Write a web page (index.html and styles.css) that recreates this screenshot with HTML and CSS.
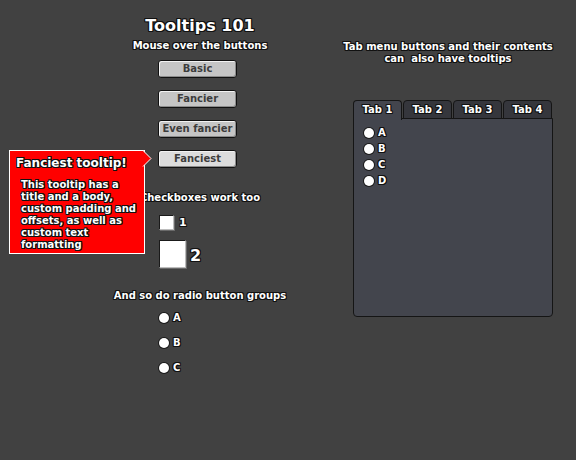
FILE: index.html
```html
<!DOCTYPE html>
<html>
<head>
<meta charset="utf-8">
<link rel="stylesheet" href="styles.css">
</head>
<body>
<div class="page">
  <div class="left">
    <h1 class="title">Tooltips 101</h1>
    <p class="label sub">Mouse over the buttons</p>
    <div class="buttons">
      <div class="btn">Basic</div>
      <div class="btn">Fancier</div>
      <div class="btn">Even fancier</div>
      <div class="btn hover">Fanciest</div>
    </div>
    <p class="label sec-check">Checkboxes work too</p>
    <div class="checks">
      <div class="check-row"><span class="box small"></span><span class="clabel">1</span></div>
      <div class="check-row big-row"><span class="box big"></span><span class="clabel big-label">2</span></div>
    </div>
    <p class="label sec-radio">And so do radio button groups</p>
    <div class="radios">
      <div class="radio-row"><span class="dot"></span><span class="rlabel">A</span></div>
      <div class="radio-row"><span class="dot"></span><span class="rlabel">B</span></div>
      <div class="radio-row"><span class="dot"></span><span class="rlabel">C</span></div>
    </div>
  </div>
  <div class="right">
    <p class="label tabs-info">Tab menu buttons and their contents<br>can &nbsp;also have tooltips</p>
    <div class="tabmenu">
      <div class="tabs">
        <div class="tab active">Tab 1</div>
        <div class="tab">Tab 2</div>
        <div class="tab">Tab 3</div>
        <div class="tab">Tab 4</div>
      </div>
      <div class="panel">
        <div class="radio-row p"><span class="dot"></span><span class="rlabel">A</span></div>
        <div class="radio-row p"><span class="dot"></span><span class="rlabel">B</span></div>
        <div class="radio-row p"><span class="dot"></span><span class="rlabel">C</span></div>
        <div class="radio-row p"><span class="dot"></span><span class="rlabel">D</span></div>
      </div>
    </div>
  </div>
</div>
<div class="tooltip">
  <div class="tt-title">Fanciest tooltip!</div>
  <div class="tt-body">This tooltip has a<br>title and a body,<br>custom padding and<br>offsets, as well as<br>custom text<br>formatting</div>
  <svg class="tt-arrow" width="10" height="18" viewBox="0 0 10 18">
    <polygon points="0,0.5 8,8.5 0,16.5" fill="#ff0000"/>
    <polyline points="0,0.5 8,8.5 0,16.5" fill="none" stroke="#ffffff" stroke-width="1"/>
  </svg>
</div>
</body>
</html>
```
FILE: styles.css
```css
html, body {
  margin: 0;
  padding: 0;
}
body {
  width: 576px;
  height: 460px;
  background: #414141;
  font-family: "DejaVu Sans", sans-serif;
  font-weight: bold;
  color: #fff;
  position: relative;
  overflow: hidden;
}
.page {
  display: flex;
  padding-left: 60px;
}
.left {
  width: 280px;
  padding-top: 16px;
  text-align: center;
}
.right {
  width: 216px;
  padding-top: 41px;
  text-align: center;
}
.title, .label, .rlabel, .clabel, .tab, .tt-title, .tt-body {
  text-shadow: -1px -1px 0 #111, 1px -1px 0 #111, -1px 1px 0 #111, 1px 1px 0 #111,
               0 1px 0 #111, 1px 0 0 #111, -1px 0 0 #111, 0 -1px 0 #111;
}
.title {
  margin: 0;
  font-size: 16px;
  line-height: 20px;
}
.label {
  margin: 0;
  font-size: 10px;
  line-height: 12px;
}
.sub { margin-top: 4px; }
.buttons {
  margin-top: 8px;
  padding-left: 98px;
  display: flex;
  flex-direction: column;
  align-items: flex-start;
  gap: 12px;
}
.btn {
  box-sizing: border-box;
  width: 79px;
  height: 18px;
  border: 1px solid #111;
  border-radius: 3px;
  background: #c5c5c5;
  box-shadow: inset 1px 1px 0 #f2f2f2, inset -1px -1px 0 #8c8c8c;
  color: #3c3c3c;
  font-size: 10px;
  line-height: 16px;
  text-align: center;
}
.btn.hover { background: #dcdcdc; }
.sec-check { margin-top: 24px; }
.checks {
  padding-left: 99px;
  text-align: left;
}
.check-row {
  display: flex;
  align-items: center;
  margin-top: 11px;
}
.check-row.big-row { margin-top: 10px; }
.box {
  box-sizing: border-box;
  background: #fff;
  border: 1px solid;
  border-color: #1a1a1a #bdbdbd #bdbdbd #1a1a1a;
  box-shadow: 1px 1px 0 #6a6a6a;
}
.box.small { width: 15px; height: 15px; }
.box.big { width: 27px; height: 28px; }
.clabel {
  margin-left: 5px;
  font-size: 11px;
  line-height: 12px;
}
.clabel.big-label {
  margin-left: 4px;
  margin-top: 3px;
  font-size: 16px;
  line-height: 18px;
}
.sec-radio { margin-top: 22px; }
.radios {
  margin-top: 10px;
  padding-left: 99px;
  display: flex;
  flex-direction: column;
  gap: 13px;
}
.radio-row {
  display: flex;
  align-items: center;
  height: 12px;
}
.dot {
  width: 10px;
  height: 10px;
  border-radius: 50%;
  background: #fff;
  box-shadow: 0 0 0 1px #1a1a1a;
}
.rlabel {
  margin-left: 4px;
  font-size: 10px;
  line-height: 12px;
}
.tabmenu {
  margin-top: 35px;
  margin-left: 13px;
  width: 200px;
  text-align: left;
}
.tabs {
  display: flex;
  gap: 1px;
  position: relative;
  z-index: 1;
}
.tab {
  box-sizing: border-box;
  width: 49px;
  height: 19px;
  border: 1px solid #151515;
  border-radius: 4px 4px 0 0;
  background: #35363c;
  font-size: 10px;
  line-height: 17px;
  text-align: center;
}
.tab.active {
  background: #43454d;
  height: 20px;
  margin-bottom: -1px;
  border-bottom: none;
}
.panel {
  box-sizing: border-box;
  height: 199px;
  margin-top: -1px;
  background: #43454d;
  border: 1px solid #151515;
  border-radius: 0 0 4px 4px;
  padding: 8px 0 0 10px;
  display: flex;
  flex-direction: column;
  gap: 4px;
}
.tooltip {
  position: absolute;
  left: 9px;
  top: 150px;
  box-sizing: border-box;
  width: 136px;
  height: 104px;
  background: #ff0000;
  border: 1px solid #fff;
  padding: 5px 0 0 6px;
}
.tt-title {
  font-size: 12px;
  line-height: 14px;
}
.tt-body {
  margin-top: 9px;
  margin-left: 5px;
  font-size: 10px;
  line-height: 12px;
}
.tt-arrow {
  position: absolute;
  right: -9px;
  top: -1px;
  overflow: visible;
}
```
